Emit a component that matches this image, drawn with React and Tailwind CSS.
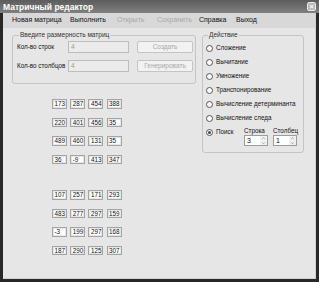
import { ChevronUp, ChevronDown } from "lucide-react";

const first = [
  ["173", "287", "454", "388"],
  ["220", "401", "456", "35"],
  ["489", "460", "131", "35"],
  ["36", "-9", "413", "347"],
];

const second = [
  ["107", "257", "171", "293"],
  ["483", "277", "297", "159"],
  ["-3", "199", "297", "168"],
  ["187", "290", "125", "307"],
];

const actions = [
  "Сложение",
  "Вычитание",
  "Умножение",
  "Транспонирование",
  "Вычисление детерминанта",
  "Вычисление следа",
];

function Matrix({ rows }) {
  return (
    <div className="grid grid-cols-[15px_15px_15px_15px] gap-x-[3.2px] gap-y-[9px]">
      {rows.flat().map((v, i) => (
        <div
          key={i}
          className="h-[9.5px] bg-white border border-[#a4a4a4] shadow-[inset_0_0_0_1px_#e6e6e6] text-[6.3px] leading-[8px] pl-[1.5px] text-[#111] whitespace-nowrap">
          {v}
        </div>
      ))}
    </div>
  );
}

function Radio({ checked }) {
  return (
    <span className="w-[7px] h-[7px] rounded-full border border-[#555] bg-white flex items-center justify-center shrink-0">
      {checked && <span className="w-[3px] h-[3px] rounded-full bg-[#444]" />}
    </span>
  );
}

function Spinner({ value }) {
  return (
    <div className="w-[24px] h-[11px] bg-white border border-[#9c9c9c] flex items-center">
      <span className="flex-1 pl-[2px] text-[7px] leading-[9px]">{value}</span>
      <span className="w-[7px] h-full flex flex-col items-center justify-center bg-[#f0f0f0] text-[#777]">
        <ChevronUp size={5} strokeWidth={3} />
        <ChevronDown size={5} strokeWidth={3} />
      </span>
    </div>
  );
}

export default function App() {
  return (
    <div className="w-[319px] h-[282px] bg-[#282828] flex flex-col font-['Liberation_Sans',Arial,sans-serif]">
      <div className="h-[13px] flex items-center justify-between pl-[3px] pr-[3px] bg-gradient-to-b from-[#5c5c5c] to-[#808080]">
        <span className="text-white font-bold text-[8.5px] leading-[10px]">Матричный редактор</span>
        <span className="w-[9px] h-[9px] rounded-[2px] bg-[#b8b8b8] border border-[#e8e8e8] flex items-center justify-center text-white text-[7px] leading-none font-bold">
          ×
        </span>
      </div>

      <div className="flex-1 mx-[3px] mb-[3px] flex flex-col border-r border-b border-[#cfcfcf]">
        <div className="h-[15px] bg-[#d8d8d8] flex items-center text-[7px] text-[#111] whitespace-nowrap">
          <span className="ml-[9px] w-[58px]">Новая матрица</span>
          <span className="w-[47px]">Выполнить</span>
          <span className="w-[40px] text-[#a8a8a8]">Открыть</span>
          <span className="w-[42px] text-[#a8a8a8]">Сохранить</span>
          <span className="w-[37px]">Справка</span>
          <span>Выход</span>
        </div>

        <div className="flex-1 bg-[#e6e6e6] flex items-start pt-[3px] pl-[9px] whitespace-nowrap">
          <div className="flex flex-col">
            <fieldset className="w-[184px] border border-[#c4c4c4] rounded-[3px] px-[4px] pr-[2px] pb-[11px]">
              <legend className="ml-[2px] px-[1px] text-[6.5px] leading-[8px] text-[#333]">
                Введите размерность матриц
              </legend>
              <div className="flex flex-col gap-[7px] mt-[2px]">
                <div className="flex items-center h-[12px]">
                  <span className="w-[51px] text-[6.3px] text-[#111]">Кол-во строк</span>
                  <div className="w-[61px] h-[12px] border border-[#bdbdbd] bg-[#ebebeb] text-[6.5px] leading-[10px] pl-[2px] text-[#9a9a9a]">4</div>
                  <div className="ml-[8px] w-[56px] h-[12px] border border-[#c4c4c4] rounded-[2px] bg-[#f2f2f2] text-[6.5px] leading-[10px] text-center text-[#a8a8a8]">Создать</div>
                </div>
                <div className="flex items-center h-[12px]">
                  <span className="w-[51px] text-[6.3px] text-[#111]">Кол-во столбцов</span>
                  <div className="w-[61px] h-[12px] border border-[#bdbdbd] bg-[#ebebeb] text-[6.5px] leading-[10px] pl-[2px] text-[#9a9a9a]">4</div>
                  <div className="ml-[8px] w-[56px] h-[12px] border border-[#c4c4c4] rounded-[2px] bg-[#f2f2f2] text-[6.5px] leading-[10px] text-center text-[#a8a8a8]">Генерировать</div>
                </div>
              </div>
            </fieldset>

            <div className="ml-[40px] mt-[15px] flex flex-col gap-[26px]">
              <Matrix rows={first} />
              <Matrix rows={second} />
            </div>
          </div>

          <fieldset className="ml-[6px] w-[102px] border border-[#c4c4c4] rounded-[3px] pl-[3px] pb-[6px]">
            <legend className="ml-[2px] px-[1px] text-[6.5px] leading-[8px] text-[#333]">Действие</legend>
            <div className="flex flex-col mt-[2px] text-[6.3px] text-[#111]">
              {actions.map((a) => (
                <div key={a} className="h-[14px] flex items-center gap-[3px]">
                  <Radio />
                  <span>{a}</span>
                </div>
              ))}
              <div className="flex items-start">
                <div className="w-[38px] h-[14px] flex items-center gap-[3px]">
                  <Radio checked />
                  <span>Поиск</span>
                </div>
                <div className="flex flex-col pt-[1px]">
                  <span className="h-[9px] leading-[9px]">Строка</span>
                  <Spinner value="3" />
                </div>
                <div className="flex flex-col pt-[1px] ml-[5px]">
                  <span className="h-[9px] leading-[9px]">Столбец</span>
                  <Spinner value="1" />
                </div>
              </div>
            </div>
          </fieldset>
        </div>
      </div>
    </div>
  );
}
